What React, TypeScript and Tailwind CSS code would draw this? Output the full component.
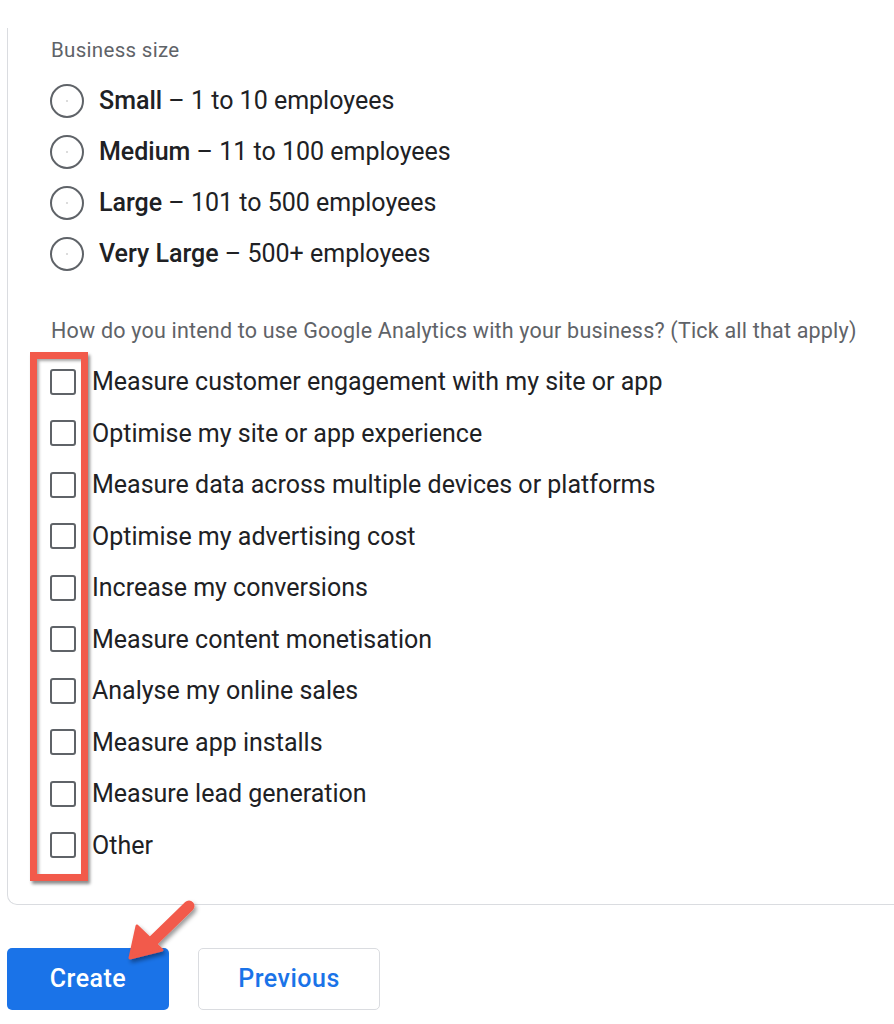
import React from "react";

const sizes = [
  { name: "Small", desc: "1 to 10 employees" },
  { name: "Medium", desc: "11 to 100 employees" },
  { name: "Large", desc: "101 to 500 employees" },
  { name: "Very Large", desc: "500+ employees" },
];

const uses = [
  "Measure customer engagement with my site or app",
  "Optimise my site or app experience",
  "Measure data across multiple devices or platforms",
  "Optimise my advertising cost",
  "Increase my conversions",
  "Measure content monetisation",
  "Analyse my online sales",
  "Measure app installs",
  "Measure lead generation",
  "Other",
];

const Radio = () => (
  <span className="flex h-[34px] w-[34px] shrink-0 items-center justify-center rounded-full border-2 border-[#5f6368]">
    <span className="h-[2px] w-[2px] rounded-full bg-[#d0d0d0]" />
  </span>
);

const Checkbox = () => (
  <span className="h-[26px] w-[26px] shrink-0 rounded-[3px] border-2 border-[#5f6368]" />
);

export default function App() {
  return (
    <div
      className="relative h-[1024px] w-[894px] overflow-hidden bg-white text-[#202124]"
      style={{ fontFamily: "Roboto, 'Liberation Sans', sans-serif" }}
    >
      <div className="ml-[7px] mt-[28px] w-[920px] rounded-bl-[10px] border-b border-l border-[#dadce0] pb-[33px] pl-[43px] pt-[10px]">
        <div className="h-[24px] text-[20.5px] leading-[24px] tracking-[0.3px] text-[#5f6368]">Business size</div>
        <div className="mt-[13px]">
          {sizes.map((s) => (
            <div key={s.name} className="-ml-[1px] flex h-[51px] items-center gap-[15px]">
              <Radio />
              <span className="text-[25px] leading-none">
                <span className="font-medium">{s.name}</span> – {s.desc}
              </span>
            </div>
          ))}
        </div>
        <div className="mt-[39px] h-[26px] text-[21.5px] leading-[26px] tracking-[0.2px] text-[#5f6368]">
          How do you intend to use Google Analytics with your business? (Tick all that apply)
        </div>
        <div className="mt-[12px]">
          {uses.map((u) => (
            <div key={u} className="-ml-[1px] flex h-[51.5px] items-center gap-[16px]">
              <Checkbox />
              <span className="text-[25px] leading-none">{u}</span>
            </div>
          ))}
        </div>
      </div>

      <div className="ml-[7px] mt-[43px] flex gap-[29px]">
        <button className="h-[62px] w-[162px] rounded-[5px] bg-[#1a73e8] text-[25px] font-medium tracking-[0.5px] text-white">
          Create
        </button>
        <button className="h-[62px] w-[182px] rounded-[5px] border border-[#dadce0] bg-white text-[25px] font-medium tracking-[0.5px] text-[#1a73e8]">
          Previous
        </button>
      </div>

      {/* annotation: red highlight box */}
      <div className="pointer-events-none absolute left-[30px] top-[352px] h-[529px] w-[58px] border-[7px] border-[#f25a4b] shadow-[2px_3px_3px_rgba(0,0,0,0.45),inset_2px_2px_3px_rgba(0,0,0,0.35)]" />

      {/* annotation: arrow */}
      <svg
        className="pointer-events-none absolute left-[110px] top-[890px]"
        width="100"
        height="90"
        viewBox="0 0 100 90"
      >
        <defs>
          <filter id="sh" x="-20%" y="-20%" width="150%" height="150%">
            <feDropShadow dx="2" dy="3" stdDeviation="2" floodColor="#000" floodOpacity="0.4" />
          </filter>
        </defs>
        <g filter="url(#sh)" fill="#f25a4b" stroke="#f25a4b">
          <line x1="79" y1="16" x2="42" y2="52" strokeWidth="11" strokeLinecap="round" />
          <polygon points="20,68 27,36 52,60" strokeWidth="3" strokeLinejoin="round" />
        </g>
      </svg>
    </div>
  );
}
